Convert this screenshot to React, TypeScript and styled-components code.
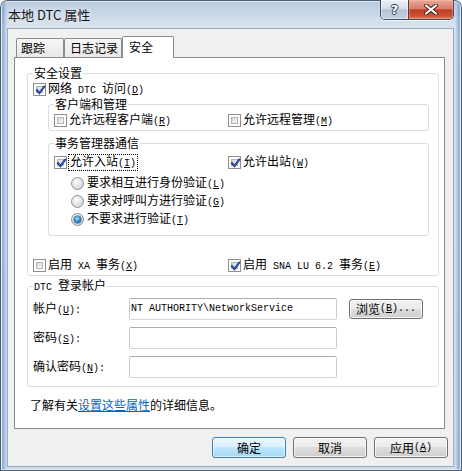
import React from "react";
import styled, { createGlobalStyle } from "styled-components";

const GlobalStyle = createGlobalStyle`
  html, body { margin: 0; padding: 0; background: #ffffff; }
  body {
    font-family: "Noto Sans CJK SC", "Noto Sans", sans-serif;
    font-size: 12px;
    line-height: 14px;
    color: #000;
  }
  * { box-sizing: border-box; }
`;

const Frame = styled.div`
  width: 462px;
  height: 471px;
  display: flex;
  flex-direction: column;
  border-radius: 7px 7px 0 0;
  overflow: hidden;
  background:
    linear-gradient(to right, rgba(80,130,195,0) 1px, rgba(80,130,195,0.55) 3px, rgba(140,180,225,0.45) 5px, rgba(80,130,195,0) 7px),
    linear-gradient(to left, rgba(80,130,195,0) 1px, rgba(80,130,195,0.55) 3px, rgba(140,180,225,0.45) 5px, rgba(80,130,195,0) 7px),
    linear-gradient(to bottom, #b9cbe0 0, #d8e2ed 26px, #d0dbe8 100%);
  box-shadow: inset 0 0 0 1px #4f6075, inset 0 0 0 2px rgba(255,255,255,0.5);
`;

const TitleBar = styled.div`
  height: 28px;
  display: flex;
  align-items: flex-start;
  padding: 0 8px 0 8px;
`;

const Title = styled.div`
  margin-top: 6px;
  font-size: 13px;
  line-height: 18px;
  color: #141414;
  text-shadow: 0 0 6px rgba(255,255,255,0.95);
`;

const CaptionGroup = styled.div`
  margin-left: auto;
  display: flex;
  height: 20px;
  border: 1px solid #3d4f65;
  border-top: none;
  border-radius: 0 0 5px 5px;
  overflow: hidden;
  box-shadow: 0 1px 0 rgba(255,255,255,0.7);
`;

const HelpButton = styled.div`
  width: 27px;
  display: flex;
  align-items: center;
  justify-content: center;
  background: linear-gradient(#edf1f6 0%, #d5dee8 45%, #b4c3d4 52%, #c5d2df 100%);
  box-shadow: inset 0 0 0 1px rgba(255,255,255,0.45);
`;

const HelpGlyph = styled.span`
  font-family: "DejaVu Sans", sans-serif;
  font-weight: bold;
  font-size: 13px;
  line-height: 14px;
  color: #ffffff;
  text-shadow: 1px 0 0 #2a3a4e, -1px 0 0 #2a3a4e, 0 1px 0 #2a3a4e, 0 -1px 0 #2a3a4e;
`;

const CloseButton = styled.div`
  width: 45px;
  border-left: 1px solid #5a3a36;
  display: flex;
  align-items: center;
  justify-content: center;
  background: linear-gradient(#eba899 0%, #da7f6c 45%, #c23b25 52%, #cf5236 85%, #e3825c 100%);
  box-shadow: inset 0 0 0 1px rgba(255,200,190,0.35);
`;

const Client = styled.div`
  margin-left: 7px;
  width: 447px;
  height: 439px;
  border: 1px solid #9aa9bb;
  background: #f0f0f0;
  display: flex;
  flex-direction: column;
  align-items: flex-start;
  padding: 7px 5px 0 6px;
`;

const TabStrip = styled.div`
  display: flex;
  align-items: flex-end;
  height: 22px;
  padding-left: 2px;
  margin-bottom: -1px;
  position: relative;
  z-index: 1;
`;

const Tab = styled.div<{ $w: number; $pl: number; $active?: boolean }>`
  width: ${(p) => p.$w}px;
  height: ${(p) => (p.$active ? 22 : 19)}px;
  margin-bottom: ${(p) => (p.$active ? 0 : 1)}px;
  padding-left: ${(p) => p.$pl}px;
  padding-top: ${(p) => (p.$active ? 3 : 2)}px;
  border: 1px solid #898c95;
  border-bottom: none;
  border-radius: 2px 2px 0 0;
  background: ${(p) => (p.$active ? "#ffffff" : "linear-gradient(#f6f6f6, #e9e9e9)")};
  line-height: 14px;
  white-space: nowrap;
`;

const Panel = styled.div`
  position: relative;
  z-index: 0;
  width: 431px;
  height: 372px;
  border: 1px solid #898c95;
  background: #ffffff;
  display: flex;
  flex-direction: column;
  align-items: flex-start;
  padding: 8px 0 0 12px;
`;

const Group = styled.fieldset<{ $ml?: number; $mr?: number; $mt?: number; $pl?: number; $pb?: number; $w?: number }>`
  margin: ${(p) => p.$mt ?? 0}px ${(p) => p.$mr ?? 0}px 0 ${(p) => p.$ml ?? 0}px;
  ${(p) => (p.$w ? `width: ${p.$w}px;` : "align-self: stretch;")}
  border: 1px solid #d5dfe5;
  border-radius: 3px;
  padding: 0 0 ${(p) => p.$pb ?? 0}px ${(p) => p.$pl ?? 5}px;
  min-width: 0;
  display: flex;
  flex-direction: column;
`;

const Legend = styled.legend`
  padding: 0 1px;
  margin: 0;
  line-height: 14px;
  white-space: nowrap;
`;

const Lt = styled.span`
  font-family: "Liberation Mono", monospace;
  font-size: 10px;
  white-space: pre;
`;

const CheckRow = styled.div<{ $mt?: number }>`
  display: flex;
  align-items: center;
  gap: 2px;
  height: 15px;
  margin-top: ${(p) => p.$mt ?? 0}px;
  white-space: nowrap;
`;

const TwoCol = styled.div<{ $first: number; $mt: number }>`
  display: grid;
  grid-template-columns: ${(p) => p.$first}px auto;
  margin-top: ${(p) => p.$mt}px;
`;

const Box = styled.span`
  position: relative;
  flex: none;
  width: 13px;
  height: 13px;
  border: 1px solid #8e8f8f;
  background: #ffffff;
  &::before {
    content: "";
    position: absolute;
    inset: 2px;
    border: 1px solid #b4b8be;
    background: linear-gradient(135deg, #cfd2d7 0%, #e9eaec 55%, #f9f9f9 100%);
  }
  svg {
    position: absolute;
    left: 0;
    top: 0;
  }
`;

const Focus = styled.span`
  outline: 1px dotted #000;
  outline-offset: 0;
  padding: 0 1px;
  line-height: 12px;
`;

const RadioList = styled.div`
  display: flex;
  flex-direction: column;
  margin: 4px 0 0 17px;
`;

const RadioRow = styled.div`
  display: flex;
  align-items: center;
  gap: 3px;
  height: 18px;
  white-space: nowrap;
`;

const RadioDot = styled.span<{ $on?: boolean }>`
  position: relative;
  flex: none;
  width: 13px;
  height: 13px;
  border-radius: 50%;
  border: 1px solid #8e8f8f;
  background: radial-gradient(circle at 40% 35%, #ffffff 0%, #e6e6e6 45%, #c8c8c8 100%);
  &::after {
    content: "";
    display: ${(p) => (p.$on ? "block" : "none")};
    position: absolute;
    left: 2px;
    top: 2px;
    width: 7px;
    height: 7px;
    border-radius: 50%;
    background: radial-gradient(circle at 45% 40%, #b8e6ff 0%, #3d9be0 40%, #0d5aa8 80%, #0b3f7c 100%);
    box-shadow: 0 0 0 0.5px #1a3e70;
  }
`;

const FormRow = styled.div<{ $mt: number }>`
  display: flex;
  align-items: center;
  height: 22px;
  margin-top: ${(p) => p.$mt}px;
  white-space: nowrap;
`;

const FieldLabel = styled.span`
  width: 96px;
  flex: none;
`;

const TextBox = styled.div`
  width: 208px;
  height: 22px;
  flex: none;
  border: 1px solid;
  border-color: #abadb3 #c9ccd2 #d3d7dd #c9ccd2;
  border-radius: 2px;
  background: #ffffff;
  padding-left: 1px;
  display: flex;
  align-items: center;
`;

const Button = styled.div<{ $w?: number; $h?: number; $default?: boolean }>`
  width: ${(p) => p.$w ?? 74}px;
  height: ${(p) => p.$h ?? 21}px;
  flex: none;
  display: flex;
  align-items: center;
  justify-content: center;
  border: 1px solid ${(p) => (p.$default ? "#3c7fb1" : "#707070")};
  border-radius: 3px;
  background: ${(p) =>
    p.$default
      ? "linear-gradient(#eaf6fd 0%, #d9f0fc 50%, #bee6fd 50%, #a7d9f5 100%)"
      : "linear-gradient(#f2f2f2 0%, #ebebeb 50%, #dddddd 50%, #cfcfcf 100%)"};
  box-shadow: inset 0 0 0 1px ${(p) => (p.$default ? "rgba(255,255,255,0.55)" : "rgba(255,255,255,0.75)")};
  white-space: nowrap;
  line-height: 14px;
`;

const InfoLine = styled.p`
  margin: 11px 0 0 3px;
  line-height: 14px;
  white-space: nowrap;
`;

const InfoLink = styled.a`
  color: #0066cc;
  text-decoration: underline;
  cursor: pointer;
`;

const ButtonRow = styled.div`
  align-self: stretch;
  display: flex;
  justify-content: flex-end;
  gap: 7px;
  margin-top: 8px;
  padding-right: 0;
`;

const CheckMark = () => (
  <svg width="13" height="13" viewBox="0 0 13 13">
    <path d="M3 6.3 L5.4 9 L10.2 2.8" fill="none" stroke="#1f3c8c" strokeWidth="2.1" strokeLinecap="square" strokeLinejoin="miter" />
    <path d="M3.3 6.4 L5.4 8.6 L9.9 3.1" fill="none" stroke="#4a6fc0" strokeWidth="0.8" />
  </svg>
);

const Check: React.FC<{ checked?: boolean }> = ({ checked }) => <Box>{checked && <CheckMark />}</Box>;

const CloseIcon = () => (
  <svg width="14" height="11" viewBox="0 0 14 11">
    <path d="M2 1.5 L12 9.5 M12 1.5 L2 9.5" stroke="#3a2020" strokeWidth="4" strokeLinecap="round" fill="none" />
    <path d="M2 1.5 L12 9.5 M12 1.5 L2 9.5" stroke="#ffffff" strokeWidth="2.2" strokeLinecap="round" fill="none" />
  </svg>
);

const M: React.FC<{ k: string; tail?: string }> = ({ k, tail }) => (
  <Lt>
    (<u>{k}</u>){tail ?? ""}
  </Lt>
);

export default function App() {
  return (
    <>
      <GlobalStyle />
      <Frame>
        <TitleBar>
          <Title>本地 DTC 属性</Title>
          <CaptionGroup>
            <HelpButton>
              <HelpGlyph>?</HelpGlyph>
            </HelpButton>
            <CloseButton>
              <CloseIcon />
            </CloseButton>
          </CaptionGroup>
        </TitleBar>
        <Client>
          <TabStrip>
            <Tab $w={48} $pl={4}>跟踪</Tab>
            <Tab $w={58} $pl={5}>日志记录</Tab>
            <Tab $w={52} $pl={6} $active>安全</Tab>
          </TabStrip>
          <Panel>
            <Group $w={412} $pb={2}>
              <Legend>安全设置</Legend>
              <CheckRow $mt={2}>
                <Check checked />
                <span>
                  网络<Lt> DTC </Lt>访问<M k="D" />
                </span>
              </CheckRow>
              <Group $ml={15} $mr={9} $pb={2}>
                <Legend>客户端和管理</Legend>
                <TwoCol $first={174} $mt={2}>
                  <CheckRow>
                    <Check />
                    <span>
                      允许远程客户端<M k="R" />
                    </span>
                  </CheckRow>
                  <CheckRow>
                    <Check />
                    <span>
                      允许远程管理<M k="M" />
                    </span>
                  </CheckRow>
                </TwoCol>
              </Group>
              <Group $ml={15} $mr={9} $mt={5} $pb={7}>
                <Legend>事务管理器通信</Legend>
                <TwoCol $first={174} $mt={5}>
                  <CheckRow>
                    <Check checked />
                    <Focus>
                      允许入站<M k="I" />
                    </Focus>
                  </CheckRow>
                  <CheckRow>
                    <Check checked />
                    <span>
                      允许出站<M k="W" />
                    </span>
                  </CheckRow>
                </TwoCol>
                <RadioList>
                  <RadioRow>
                    <RadioDot />
                    <span>
                      要求相互进行身份验证<M k="L" />
                    </span>
                  </RadioRow>
                  <RadioRow>
                    <RadioDot />
                    <span>
                      要求对呼叫方进行验证<M k="G" />
                    </span>
                  </RadioRow>
                  <RadioRow>
                    <RadioDot $on />
                    <span>
                      不要求进行验证<M k="T" />
                    </span>
                  </RadioRow>
                </RadioList>
              </Group>
              <TwoCol $first={195} $mt={22}>
                <CheckRow>
                  <Check />
                  <span>
                    启用<Lt> XA </Lt>事务<M k="X" />
                  </span>
                </CheckRow>
                <CheckRow>
                  <Check checked />
                  <span>
                    启用<Lt> SNA LU 6.2 </Lt>事务<M k="E" />
                  </span>
                </CheckRow>
              </TwoCol>
            </Group>
            <Group $w={412} $mt={2} $pb={8}>
              <Legend>
                <Lt>DTC </Lt>登录帐户
              </Legend>
              <FormRow $mt={3}>
                <FieldLabel>
                  帐户<M k="U" tail=":" />
                </FieldLabel>
                <TextBox>
                  <Lt>NT AUTHORITY\NetworkService</Lt>
                </TextBox>
                <Button $w={74} $h={20} style={{ marginLeft: 12 }}>
                  浏览<M k="B" tail="..." />
                </Button>
              </FormRow>
              <FormRow $mt={7}>
                <FieldLabel>
                  密码<M k="S" tail=":" />
                </FieldLabel>
                <TextBox />
              </FormRow>
              <FormRow $mt={7}>
                <FieldLabel>
                  确认密码<M k="N" tail=":" />
                </FieldLabel>
                <TextBox />
              </FormRow>
            </Group>
            <InfoLine>
              了解有关<InfoLink>设置这些属性</InfoLink>的详细信息。
            </InfoLine>
          </Panel>
          <ButtonRow>
            <Button $default>确定</Button>
            <Button>取消</Button>
            <Button>
              应用<M k="A" />
            </Button>
          </ButtonRow>
        </Client>
      </Frame>
    </>
  );
}
